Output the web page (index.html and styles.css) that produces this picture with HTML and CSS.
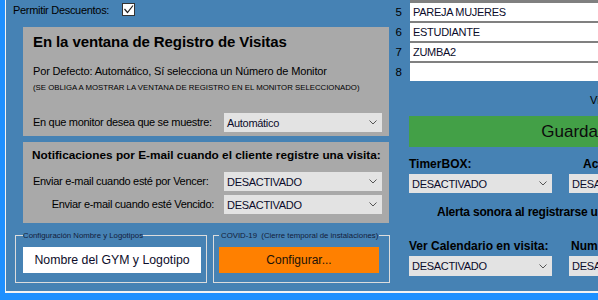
FILE: index.html
```html
<!DOCTYPE html>
<html lang="es">
<head>
<meta charset="utf-8">
<title>Configuración</title>
<link rel="stylesheet" href="styles.css">
</head>
<body>
<div class="frame">
  <div class="left">
    <div class="discount-row">
      <span class="lbl">Permitir Descuentos:</span>
      <span class="check"><svg width="11" height="11" viewBox="0 0 11 11"><polyline points="1.5,5 4.5,8.5 10,1.5" fill="none" stroke="#222" stroke-width="1.2"/></svg></span>
    </div>

    <section class="panel panel-monitor">
      <h2 class="title">En la ventana de Registro de Visitas</h2>
      <p class="info">Por Defecto: Automático, Sí selecciona un Número de Monitor</p>
      <p class="note">(SE OBLIGA A MOSTRAR LA VENTANA DE REGISTRO EN EL MONITOR SELECCIONADO)</p>
      <div class="field">
        <span class="lbl">En que monitor desea que se muestre:</span>
        <div class="combo"><span>Automático</span><svg class="chev" width="8" height="5" viewBox="0 0 8 5"><polyline points="0.5,0.5 4,4 7.5,0.5" fill="none" stroke="#555" stroke-width="1"/></svg></div>
      </div>
    </section>

    <section class="panel panel-mail">
      <h3 class="subtitle">Notificaciones por E-mail cuando el cliente registre una visita:</h3>
      <div class="field">
        <span class="lbl">Enviar e-mail cuando esté por Vencer:</span>
        <div class="combo"><span>DESACTIVADO</span><svg class="chev" width="8" height="5" viewBox="0 0 8 5"><polyline points="0.5,0.5 4,4 7.5,0.5" fill="none" stroke="#555" stroke-width="1"/></svg></div>
      </div>
      <div class="field field-tight">
        <span class="lbl lbl-right">Enviar e-mail cuando esté Vencido:</span>
        <div class="combo"><span>DESACTIVADO</span><svg class="chev" width="8" height="5" viewBox="0 0 8 5"><polyline points="0.5,0.5 4,4 7.5,0.5" fill="none" stroke="#555" stroke-width="1"/></svg></div>
      </div>
    </section>

    <div class="groups">
      <fieldset class="group group-name">
        <legend>Configuración Nombre y Logotipos</legend>
        <button class="btn btn-white" type="button">Nombre del GYM y Logotipo</button>
      </fieldset>
      <fieldset class="group group-covid">
        <legend>COVID-19&nbsp; (Cierre temporal de instalaciones)</legend>
        <button class="btn btn-orange" type="button">Configurar...</button>
      </fieldset>
    </div>
  </div>

  <div class="right">
    <div class="list">
      <div class="nums">
        <span>5</span><span>6</span><span>7</span><span>8</span>
      </div>
      <div class="cells">
        <div class="cell">PAREJA MUJERES</div>
        <div class="cell">ESTUDIANTE</div>
        <div class="cell">ZUMBA2</div>
        <div class="cell"></div>
      </div>
    </div>
    <div class="vi">Vista previa</div>
    <button class="save" type="button">Guardar</button>
    <div class="opts">
      <div class="opt">
        <span class="blbl">TimerBOX:</span>
        <div class="combo combo-sm"><span>DESACTIVADO</span><svg class="chev" width="8" height="5" viewBox="0 0 8 5"><polyline points="0.5,0.5 4,4 7.5,0.5" fill="none" stroke="#555" stroke-width="1"/></svg></div>
      </div>
      <div class="opt">
        <span class="blbl blbl-ac">Acceso por Huella:</span>
        <div class="combo combo-sm"><span>DESACTIVADO</span><svg class="chev" width="8" height="5" viewBox="0 0 8 5"><polyline points="0.5,0.5 4,4 7.5,0.5" fill="none" stroke="#555" stroke-width="1"/></svg></div>
      </div>
    </div>
    <div class="alert">Alerta sonora al registrarse un cliente:</div>
    <div class="opts opts-2">
      <div class="opt">
        <span class="blbl">Ver Calendario en visita:</span>
        <div class="combo combo-sm"><span>DESACTIVADO</span><svg class="chev" width="8" height="5" viewBox="0 0 8 5"><polyline points="0.5,0.5 4,4 7.5,0.5" fill="none" stroke="#555" stroke-width="1"/></svg></div>
      </div>
      <div class="opt">
        <span class="blbl blbl-num">Numbre de Visitas:</span>
        <div class="combo combo-sm"><span>DESACTIVADO</span><svg class="chev" width="8" height="5" viewBox="0 0 8 5"><polyline points="0.5,0.5 4,4 7.5,0.5" fill="none" stroke="#555" stroke-width="1"/></svg></div>
      </div>
    </div>
  </div>
</div>
</body>
</html>
```

FILE: styles.css
```css
* { box-sizing: border-box; }
html, body { margin: 0; padding: 0; }
body {
  width: 598px;
  height: 300px;
  overflow: hidden;
  background: #1e90ff;
  font-family: "Liberation Sans", Arial, sans-serif;
  font-size: 11px;
  color: #000;
}
p, h2, h3 { margin: 0; }

.frame {
  margin-left: 5px;
  height: 293px;
  border-left: 1px solid #f4f4f4;
  border-bottom: 2px solid #f4f4f4;
  background: #4682b4;
  display: flex;
  overflow: hidden;
}

.left {
  width: 387px;
  flex: none;
  display: flex;
  flex-direction: column;
}

.lbl { letter-spacing: -0.3px; line-height: 13px; }

.discount-row {
  height: 27px;
  display: flex;
  align-items: flex-start;
  padding: 3px 0 0 7px;
}
.discount-row .lbl { margin-top: 1px; width: 109px; }
.check {
  width: 13px;
  height: 13px;
  background: #fff;
  border: 1px solid #333;
  display: flex;
  align-items: center;
  justify-content: center;
}

.panel {
  margin-left: 17px;
  width: 366px;
  background: #a9a9a9;
  padding: 0 7px 0 10px;
}
.panel-monitor { height: 109px; padding-top: 6px; }
.title {
  font-size: 15px;
  font-weight: bold;
  line-height: 18px;
  letter-spacing: -0.1px;
}
.info { margin-top: 14px; line-height: 13px; letter-spacing: -0.15px; }
.note { margin-top: 5px; font-size: 7.8px; line-height: 10px; letter-spacing: 0; }

.field {
  display: grid;
  grid-template-columns: 191px 158px;
  align-items: center;
  margin-top: 20px;
}
.panel-mail .field { margin-top: 10px; }
.panel-mail .field-tight { margin-top: 4px; }
.lbl-right { text-align: right; padding-right: 10px; }

.combo {
  height: 19px;
  background: #e3e3e3;
  display: flex;
  align-items: center;
  justify-content: space-between;
  padding: 0 5px 0 3px;
  color: #0b0b2a;
  letter-spacing: -0.3px;
}
.chev { flex: none; }

.panel-mail { margin-top: 6px; height: 81px; padding-top: 7px; }
.subtitle {
  font-size: 11.8px;
  font-weight: bold;
  line-height: 13px;
  margin-left: -1px;
  letter-spacing: 0;
}

.groups {
  display: flex;
  gap: 6px;
  margin: 8px 0 0 9px;
}
.group {
  margin: 0;
  border: 1px solid #dcdcdc;
  padding: 7px 5px 9px 7px;
  min-width: 0;
}
.group-name { width: 192px; }
.group-covid { width: 177px; padding-left: 5px; }
.group legend {
  font-size: 7.8px;
  line-height: 9px;
  padding: 0;
  color: #13203a;
  letter-spacing: 0;
}
.group-covid legend { padding-left: 2px; padding-right: 1px; }
.btn {
  display: block;
  height: 26px;
  border: 0;
  font-family: inherit;
  font-size: 12px;
  color: #0d0d2a;
  padding: 0;
}
.btn-white { width: 178px; background: #fff; font-size: 12.3px; }
.btn-orange { width: 160px; background: #ff8000; color: #1a1208; }

.right {
  flex: none;
  width: 400px;
}
.list { display: flex; }
.nums {
  width: 9px;
  display: flex;
  flex-direction: column;
  gap: 2px;
  padding-top: 3px;
  text-align: right;
  font-size: 11.5px;
}
.nums span { height: 18px; line-height: 18px; }
.cells {
  margin-left: 8px;
  width: 300px;
  background: #808080;
  padding-top: 3px;
  display: flex;
  flex-direction: column;
  gap: 2px;
}
.cell {
  height: 18px;
  line-height: 18px;
  background: #fff;
  padding-left: 3px;
  color: #0b0b2a;
  letter-spacing: -0.3px;
}
.vi {
  margin: 13px 0 0 197px;
  line-height: 13px;
  white-space: nowrap;
}
.save {
  display: block;
  margin: 9px 0 0 16px;
  width: 327px;
  height: 31px;
  border: 0;
  background: #43a047;
  font-family: inherit;
  font-size: 17px;
  color: #0c0c0c;
}
.opts {
  display: grid;
  grid-template-columns: 143px 143px;
  column-gap: 17px;
  margin: 11px 0 0 16px;
}
.opt { display: flex; flex-direction: column; gap: 3px; }
.blbl {
  font-weight: bold;
  font-size: 12px;
  line-height: 13px;
  white-space: nowrap;
}
.blbl-ac { padding-left: 14px; }
.blbl-num { padding-left: 2px; }
.combo-sm { width: 143px; height: 19px; }
.alert {
  margin: 13px 0 0 44px;
  font-weight: bold;
  font-size: 12px;
  line-height: 13px;
  white-space: nowrap;
  letter-spacing: -0.2px;
}
.opts-2 { margin-top: 21px; }
.opts-2 .combo-sm { height: 20px; }
```
